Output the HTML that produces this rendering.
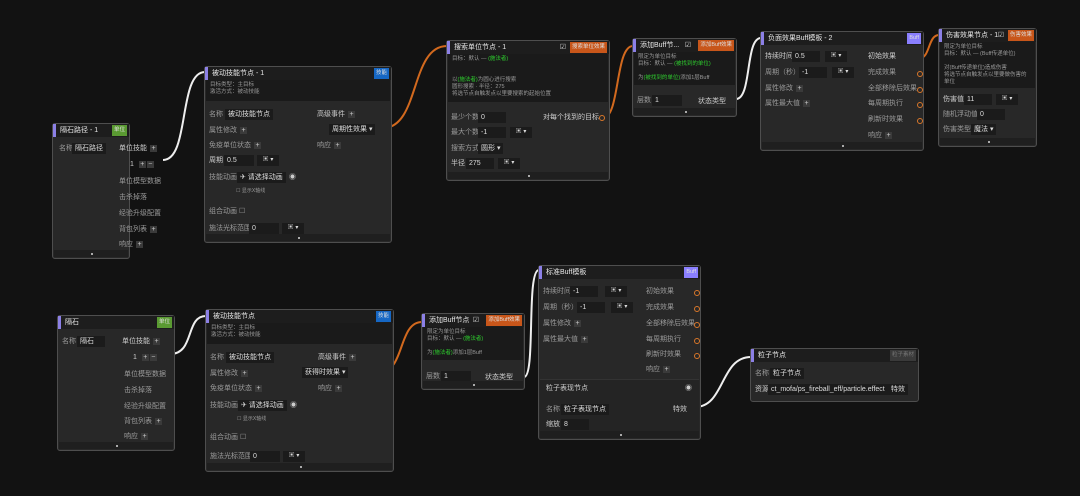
<!DOCTYPE html><html><head><meta charset="utf-8"><style>
body{margin:0;width:1080px;height:496px;background:#121212;overflow:hidden;position:relative;font-family:"Liberation Sans","Noto Sans CJK SC",sans-serif;font-size:7px;color:#9a9a9a}
.n{position:absolute;background:#282828;border:1.5px solid #4e4e4e;border-radius:3px;box-sizing:border-box}
.h{position:absolute;left:0;right:0;top:0;height:13px;background:#1d1d1d;color:#e6e6e6;font-size:7px;line-height:13px;padding-left:7px;white-space:nowrap}
.h:before{content:"";position:absolute;left:0;top:0;width:3px;height:13px;background:#8c80e6}
.tg{position:absolute;right:2px;top:1px;height:11px;line-height:11px;padding:0 2px;font-size:5.5px;color:#ddd}
.d{position:absolute;left:1px;right:1px;background:#1a1a1a;font-size:5.5px;line-height:7px;padding:2px 4px;box-sizing:border-box;color:#999}
.a{position:absolute;white-space:nowrap;line-height:10px}
.i{position:absolute;background:#1b1b1b;color:#ddd;height:11px;line-height:11px;padding:0 3px;white-space:nowrap;box-sizing:border-box}
.f{position:absolute;left:1px;right:1px;bottom:1px;height:7px;background:#1f1f1f}
.f:after{content:"";position:absolute;left:50%;top:3px;width:2px;height:2px;background:#aaa}
.dd{position:absolute;background:#1b1b1b;width:22px;height:11px;color:#ddd;font-size:6px;line-height:11px;text-align:center}
.o{position:absolute;width:4px;height:4px;border:1.3px solid #d9772a;border-radius:50%}
.pl{display:inline-block;width:7px;height:7px;background:#3a3a3a;color:#ccc;text-align:center;line-height:7px;font-size:7px;margin-left:3px;vertical-align:middle}
.g{color:#2ecc2e}
.ck{position:absolute;top:1px;color:#ccc;font-size:7px;line-height:11px}
</style></head><body>
<svg style="position:absolute;left:0;top:0" width="1080" height="496" fill="none" stroke-width="2">
<path d="M163 160 C190 160,178 72,205 72" stroke="#eee"/>
<path d="M170 354 C195 354,185 316,206 316" stroke="#eee"/>
<path d="M736 99 C752 99,745 38,761 38" stroke="#eee"/>
<path d="M524 377 C536 377,526 270,539 270" stroke="#eee"/>
<path d="M695 407 C725 407,720 357,751 357" stroke="#eee"/>
<path d="M383 128 C420 128,410 46,447 46" stroke="#d2691e"/>
<path d="M603 118 C620 118,615 46,633 46" stroke="#d2691e"/>
<path d="M920 58 C930 58,928 35,939 35" stroke="#d2691e"/>
<path d="M380 372 C405 372,398 322,422 322" stroke="#d2691e"/>
</svg>

<div class="n" style="left:52px;top:123px;width:78px;height:136px">
<div class="h">隔石路径 - 1<span class="tg" style="background:#5a9a32">单位</span></div>
<div class="a" style="left:6px;top:20px">名称</div><div class="i" style="left:19px;top:19px">隔石路径</div>
<div class="a" style="left:66px;top:20px;color:#ccc">单位技能<span class="pl">+</span></div>
<div class="a" style="left:77px;top:36px;color:#ccc">1 <span class="pl">+</span><span class="pl" style="margin-left:1px">−</span></div>
<div class="a" style="left:66px;top:53px">单位模型数据</div><div class="a" style="left:66px;top:69px">击杀掉落</div><div class="a" style="left:66px;top:85px">经验升级配置</div><div class="a" style="left:66px;top:101px">背包列表<span class="pl">+</span></div><div class="a" style="left:66px;top:116px">响应<span class="pl">+</span></div>
<div class="f"></div></div>

<div class="n" style="left:204px;top:66px;width:188px;height:177px">
<div class="h">被动技能节点 - 1<span class="tg" style="background:#1667c4">技能</span></div>
<div class="d" style="top:13px;height:21px">目标类型：主目标<br>激活方式：被动技能</div>
<div class="a" style="left:4px;top:43px">名称</div><div class="i" style="left:20px;top:42px">被动技能节点</div>
<div class="a" style="left:112px;top:43px;color:#ccc">高级事件<span class="pl">+</span></div>
<div class="i" style="left:124px;top:57px">周期性效果 ▾</div>
<div class="a" style="left:4px;top:59px">属性修改<span class="pl">+</span></div>
<div class="a" style="left:4px;top:74px">免疫单位状态<span class="pl">+</span></div><div class="a" style="left:112px;top:74px">响应<span class="pl">+</span></div>
<div class="a" style="left:4px;top:89px;color:#ccc">周期</div><div class="i" style="left:19px;top:88px;width:30px">0.5</div><div class="dd" style="left:52px;top:88px">▣ ▾</div>
<div class="a" style="left:4px;top:106px">技能动画</div><div class="i" style="left:32px;top:105px">✈ 请选择动画</div><div class="a" style="left:84px;top:106px;color:#ccc">◉</div>
<div class="a" style="left:31px;top:119px;font-size:5px">☐ 显示X轴线</div>
<div class="a" style="left:4px;top:140px">组合动画 ☐</div>
<div class="a" style="left:4px;top:157px">施法光标范围</div><div class="i" style="left:44px;top:156px;width:30px">0</div><div class="dd" style="left:77px;top:156px">▣ ▾</div>
<div class="f"></div></div>

<div class="n" style="left:446px;top:40px;width:164px;height:141px">
<div class="h">搜索单位节点 - 1<span class="ck" style="right:43px">☑</span><span class="tg" style="background:#c8561a">搜索单位效果</span></div>
<div class="d" style="top:13px;height:48px">目标：默认 — <span class="g">(施法者)</span><br><br><br>以<span class="g">(施法者)</span>为圆心进行搜索<br>圆形搜索 · 半径：275<br>将选节点自触发点以里要搜索的起始位置</div>
<div class="a" style="left:4px;top:72px">最少个数</div><div class="i" style="left:31px;top:71px;width:28px">0</div>
<div class="a" style="left:96px;top:72px;color:#ccc">对每个找到的目标</div><div class="o" style="left:152px;top:74px"></div>
<div class="a" style="left:4px;top:87px">最大个数</div><div class="i" style="left:31px;top:86px;width:28px">-1</div><div class="dd" style="left:63px;top:86px">▣ ▾</div>
<div class="a" style="left:4px;top:103px">搜索方式</div><div class="i" style="left:31px;top:102px">圆形 ▾</div>
<div class="a" style="left:4px;top:118px;color:#ccc">半径</div><div class="i" style="left:19px;top:117px;width:28px">275</div><div class="dd" style="left:51px;top:117px">▣ ▾</div>
<div class="f"></div></div>

<div class="n" style="left:632px;top:38px;width:105px;height:79px">
<div class="h">添加Buff节...<span class="ck" style="right:45px">☑</span><span class="tg" style="background:#c8561a">添加Buff效果</span></div>
<div class="d" style="top:13px;height:33px">限定为单位目标<br>目标：默认 — <span class="g">(被找到的单位)</span><br><br>为<span class="g">(被找到的单位)</span>添加1层Buff</div>
<div class="a" style="left:4px;top:57px">层数</div><div class="i" style="left:19px;top:56px;width:30px">1</div>
<div class="a" style="left:65px;top:58px;color:#ccc">状态类型</div>
<div class="f"></div></div>

<div class="n" style="left:760px;top:31px;width:164px;height:120px">
<div class="h">负面效果Buff模板 - 2<span class="tg" style="background:#8a7fff">Buff</span></div>
<div class="a" style="left:4px;top:20px;color:#ccc">持续时间</div><div class="i" style="left:31px;top:19px;width:28px">0.5</div><div class="dd" style="left:64px;top:19px">▣ ▾</div>
<div class="a" style="left:4px;top:36px">周期（秒）</div><div class="i" style="left:38px;top:35px;width:28px">-1</div><div class="dd" style="left:71px;top:35px">▣ ▾</div>
<div class="a" style="left:4px;top:52px">属性修改<span class="pl">+</span></div><div class="a" style="left:4px;top:67px">属性最大值<span class="pl">+</span></div>
<div class="a" style="left:107px;top:20px;color:#ccc">初始效果</div><div class="a" style="left:107px;top:36px">完成效果</div><div class="a" style="left:107px;top:52px">全部移除后效果</div><div class="a" style="left:107px;top:67px">每周期执行</div><div class="a" style="left:107px;top:83px">刷新时效果</div><div class="a" style="left:107px;top:99px">响应<span class="pl">+</span></div>
<div class="o" style="left:156px;top:39px"></div><div class="o" style="left:156px;top:55px"></div><div class="o" style="left:156px;top:70px"></div><div class="o" style="left:156px;top:86px"></div>
<div class="f"></div></div>

<div class="n" style="left:938px;top:28px;width:99px;height:119px">
<div class="h">伤害效果节点 - 1<span class="ck" style="right:32px">☑</span><span class="tg" style="background:#c8561a">伤害效果</span></div>
<div class="d" style="top:13px;height:46px">限定为单位目标<br>目标：默认 — (Buff传递单位)<br><br>对(Buff传递单位)造成伤害<br>将选节点自触发点以里要做伤害的单位</div>
<div class="a" style="left:4px;top:66px;color:#ccc">伤害值</div><div class="i" style="left:25px;top:65px;width:28px">11</div><div class="dd" style="left:57px;top:65px">▣ ▾</div>
<div class="a" style="left:4px;top:81px">随机浮动值</div><div class="i" style="left:38px;top:80px;width:28px">0</div>
<div class="a" style="left:4px;top:96px">伤害类型</div><div class="i" style="left:32px;top:95px">魔法 ▾</div>
<div class="f"></div></div>

<div class="n" style="left:57px;top:315px;width:118px;height:136px">
<div class="h">隔石<span class="tg" style="background:#5a9a32">单位</span></div>
<div class="a" style="left:4px;top:21px">名称</div><div class="i" style="left:19px;top:20px;width:28px">隔石</div>
<div class="a" style="left:64px;top:21px;color:#ccc">单位技能<span class="pl">+</span></div>
<div class="a" style="left:75px;top:37px;color:#ccc">1 <span class="pl">+</span><span class="pl" style="margin-left:1px">−</span></div>
<div class="a" style="left:66px;top:54px">单位模型数据</div><div class="a" style="left:66px;top:70px">击杀掉落</div><div class="a" style="left:66px;top:86px">经验升级配置</div><div class="a" style="left:66px;top:101px">背包列表<span class="pl">+</span></div><div class="a" style="left:66px;top:116px">响应<span class="pl">+</span></div>
<div class="f"></div></div>

<div class="n" style="left:205px;top:309px;width:189px;height:163px">
<div class="h">被动技能节点<span class="tg" style="background:#1667c4">技能</span></div>
<div class="d" style="top:13px;height:21px">目标类型：主目标<br>激活方式：被动技能</div>
<div class="a" style="left:4px;top:43px">名称</div><div class="i" style="left:20px;top:42px">被动技能节点</div>
<div class="a" style="left:112px;top:43px;color:#ccc">高级事件<span class="pl">+</span></div>
<div class="i" style="left:96px;top:57px">获得时效果 ▾</div>
<div class="a" style="left:4px;top:59px">属性修改<span class="pl">+</span></div>
<div class="a" style="left:4px;top:74px">免疫单位状态<span class="pl">+</span></div><div class="a" style="left:112px;top:74px">响应<span class="pl">+</span></div>
<div class="a" style="left:4px;top:91px">技能动画</div><div class="i" style="left:32px;top:90px">✈ 请选择动画</div><div class="a" style="left:84px;top:91px;color:#ccc">◉</div>
<div class="a" style="left:31px;top:104px;font-size:5px">☐ 显示X轴线</div>
<div class="a" style="left:4px;top:123px">组合动画 ☐</div>
<div class="a" style="left:4px;top:142px">施法光标范围</div><div class="i" style="left:44px;top:141px;width:30px">0</div><div class="dd" style="left:77px;top:141px">▣ ▾</div>
<div class="f"></div></div>

<div class="n" style="left:421px;top:313px;width:104px;height:77px">
<div class="h">添加Buff节点<span class="ck" style="right:45px">☑</span><span class="tg" style="background:#c8561a">添加Buff效果</span></div>
<div class="d" style="top:13px;height:33px">限定为单位目标<br>目标：默认 — <span class="g">(施法者)</span><br><br>为<span class="g">(施法者)</span>添加1层Buff</div>
<div class="a" style="left:4px;top:58px">层数</div><div class="i" style="left:19px;top:57px;width:30px">1</div>
<div class="a" style="left:63px;top:59px;color:#ccc">状态类型</div>
<div class="f"></div></div>

<div class="n" style="left:538px;top:265px;width:163px;height:175px">
<div class="h">标准Buff模板<span class="tg" style="background:#8a7fff">Buff</span></div>
<div class="a" style="left:4px;top:21px">持续时间</div><div class="i" style="left:31px;top:20px;width:28px">-1</div><div class="dd" style="left:66px;top:20px">▣ ▾</div>
<div class="a" style="left:4px;top:37px">周期（秒）</div><div class="i" style="left:38px;top:36px;width:28px">-1</div><div class="dd" style="left:72px;top:36px">▣ ▾</div>
<div class="a" style="left:4px;top:53px">属性修改<span class="pl">+</span></div><div class="a" style="left:4px;top:69px">属性最大值<span class="pl">+</span></div>
<div class="a" style="left:107px;top:21px">初始效果</div><div class="a" style="left:107px;top:37px">完成效果</div><div class="a" style="left:107px;top:53px">全部移除后效果</div><div class="a" style="left:107px;top:69px">每周期执行</div><div class="a" style="left:107px;top:84px">刷新时效果</div><div class="a" style="left:107px;top:99px">响应<span class="pl">+</span></div>
<div class="o" style="left:155px;top:24px"></div><div class="o" style="left:155px;top:40px"></div><div class="o" style="left:155px;top:56px"></div><div class="o" style="left:155px;top:72px"></div><div class="o" style="left:155px;top:87px"></div>
<div style="position:absolute;left:1px;right:1px;top:113px;height:58px;background:#242424;border-top:1px solid #333"></div>
<div class="a" style="left:7px;top:118px;color:#ccc">粒子表现节点</div><div class="a" style="left:146px;top:118px;color:#ccc">◉</div>
<div class="a" style="left:7px;top:139px">名称</div><div class="i" style="left:22px;top:138px">粒子表现节点</div>
<div class="a" style="left:134px;top:139px;color:#ccc">特效</div>
<div class="a" style="left:7px;top:154px;color:#ccc">缩放</div><div class="i" style="left:22px;top:153px;width:28px">8</div>
<div class="f"></div></div>

<div class="n" style="left:750px;top:348px;width:169px;height:54px">
<div class="h">粒子节点<span class="tg" style="background:#3a3a3a;color:#777">粒子素材</span></div>
<div class="a" style="left:4px;top:20px">名称</div><div class="i" style="left:19px;top:19px">粒子节点</div>
<div class="a" style="left:4px;top:36px;color:#ccc">资源</div><div class="i" style="left:17px;top:35px">ct_mofa/ps_fireball_eff/particle.effect</div><div class="i" style="left:137px;top:35px">特效</div>
</div>
</body></html>
